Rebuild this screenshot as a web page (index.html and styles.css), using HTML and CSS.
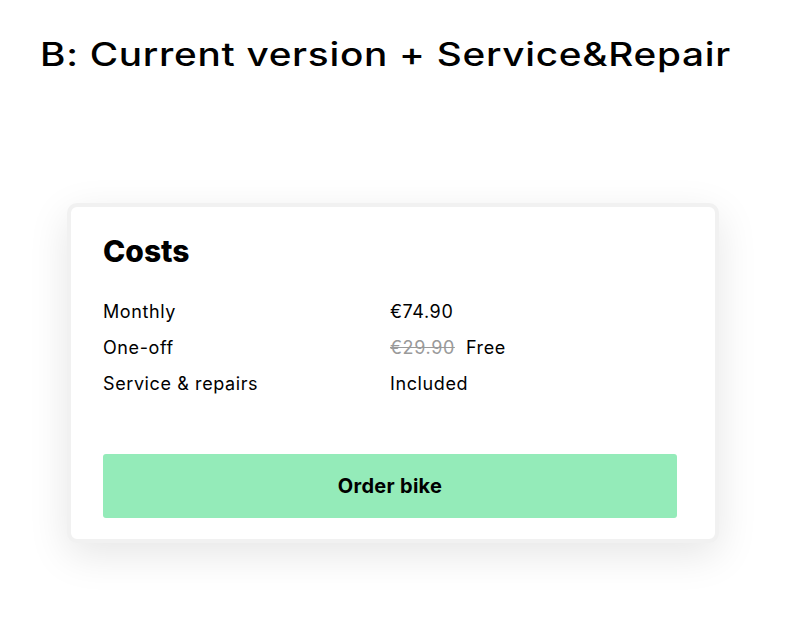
FILE: index.html
```html
<!DOCTYPE html>
<html lang="en">
<head>
<meta charset="utf-8">
<link rel="stylesheet" href="styles.css">
</head>
<body>
<h1 class="page-title"><span class="title-text">B: Current version + Service&amp;Repair</span></h1>
<section class="card">
  <h2 class="card-title">Costs</h2>
  <dl class="costs">
    <div class="row"><dt>Monthly</dt><dd>€74.90</dd></div>
    <div class="row"><dt>One-off</dt><dd><s class="old">€29.90</s>Free</dd></div>
    <div class="row"><dt>Service &amp; repairs</dt><dd>Included</dd></div>
  </dl>
  <button class="order">Order bike</button>
</section>
</body>
</html>
```
FILE: styles.css
```css
html, body {
  margin: 0;
  padding: 0;
  background: #ffffff;
}
body {
  font-family: Inter, "Noto Sans", sans-serif;
  color: #000;
  width: 790px;
  height: 640px;
  overflow: hidden;
}
.page-title {
  margin: 0;
  padding: 33px 0 0 40px;
  font-family: Inter, "DejaVu Sans", sans-serif;
  font-size: 32px;
  line-height: 44px;
  font-weight: 500;
  white-space: nowrap;
}
.title-text {
  display: inline-block;
  letter-spacing: 0.6px;
  transform: scaleX(1.21);
  transform-origin: left center;
}
.card {
  margin: 126px 0 0 67px;
  border: 4px solid #f1f1f1;
  border-radius: 10px;
  background: #fff;
  box-shadow: 0 12px 40px rgba(0, 0, 0, 0.10);
  padding: 26px 38px 21px 32px;
  box-sizing: border-box;
  width: 652px;
}
.card-title {
  margin: 0;
  font-size: 30px;
  line-height: 36px;
  font-weight: 800;
}
.costs {
  margin: 32px 0 0 0;
  display: flex;
  flex-direction: column;
  gap: 14px;
}
.row {
  display: grid;
  grid-template-columns: 287px 1fr;
  font-size: 18px;
  line-height: 22px;
  letter-spacing: 0.6px;
}
.row dt, .row dd {
  margin: 0;
}
.old {
  color: #9a9a9a;
  margin-right: 11px;
}
.order {
  display: block;
  width: 100%;
  height: 64px;
  margin-top: 59px;
  border: none;
  border-radius: 3px;
  background: #94ebb9;
  font-family: inherit;
  font-size: 20px;
  letter-spacing: 0.3px;
  font-weight: 700;
  color: #000;
}
```
